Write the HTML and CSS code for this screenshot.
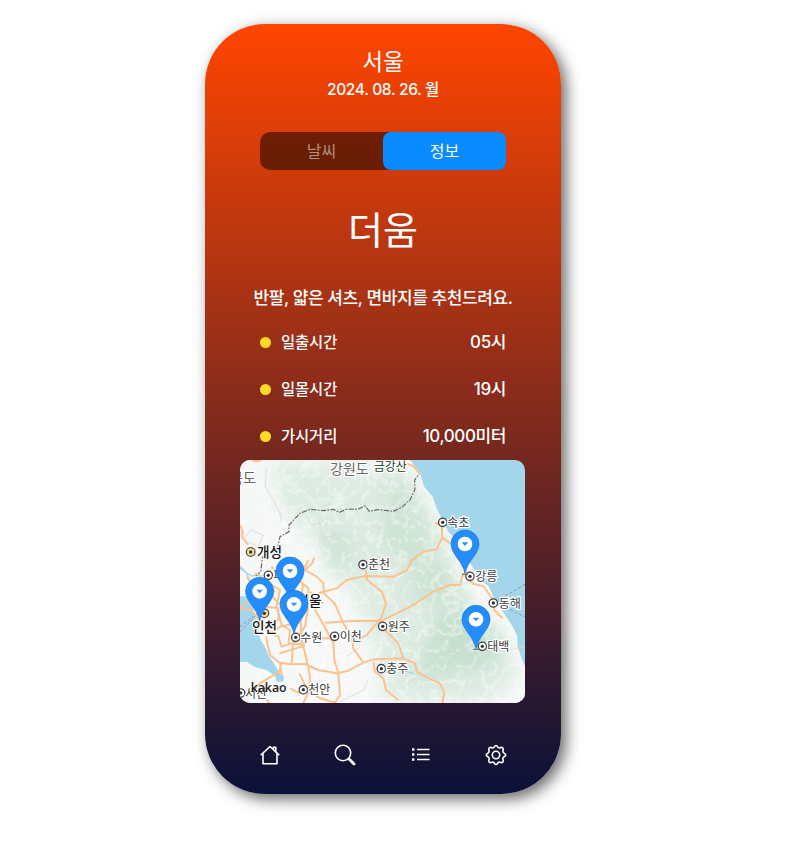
FILE: index.html
```
<!DOCTYPE html>
<html lang="ko">
<head>
<meta charset="utf-8">
<title>서울 날씨</title>
<link rel="stylesheet" href="styles.css">
</head>
<body>
<main class="phone">
  <header class="head">
    <h1 class="city">서울</h1>
    <p class="date">2024. 08. 26. 월</p>
  </header>
  <div class="tabs">
    <button class="tab">날씨</button>
    <button class="tab active">정보</button>
  </div>
  <h2 class="feel">더움</h2>
  <p class="advice">반팔, 얇은 셔츠, 면바지를 추천드려요.</p>
  <ul class="facts">
    <li><i class="dot"></i><span class="key">일출시간</span><span class="val">05시</span></li>
    <li><i class="dot"></i><span class="key">일몰시간</span><span class="val">19시</span></li>
    <li><i class="dot"></i><span class="key">가시거리</span><span class="val">10,000미터</span></li>
  </ul>
  <svg class="map" viewBox="0 0 855 729">
    <defs>
      <filter id="soft" x="-30%" y="-30%" width="160%" height="160%"><feGaussianBlur stdDeviation="26"/></filter>
      <filter id="relief" x="0" y="0" width="100%" height="100%">
        <feTurbulence type="turbulence" baseFrequency="0.026 0.021" numOctaves="5" seed="8"/>
        <feColorMatrix values="0 0 0 0 1  0 0 0 0 1  0 0 0 0 1  -3.4 0 0 0 1.05"/>
      </filter>
      <clipPath id="land"><path d="M0 0H510L540 38 552 80 578 110 592 150 608 180 625 215 655 245 680 290 700 325 715 355 745 378 760 410 775 435 795 465 818 500 832 530 833 560 845 595 855 620V729H0Z"/></clipPath>
      <g id="pin">
        <path d="M0 88C-8 50-42 30-42 0A42 42 0 0 1 42 0C42 30 8 50 0 88Z" fill="#258dfa" stroke="#1474df" stroke-width="2"/>
        <circle r="22" fill="#fff"/><path d="M-10-5H10L0 6Z" fill="#3690e8"/>
      </g>
      <g id="town"><circle r="12.5" fill="#fff" stroke="#444" stroke-width="4"/><circle r="5" fill="#333"/></g>
      <g id="metro"><circle r="13" fill="#f7df95" stroke="#5c5548" stroke-width="4"/><circle r="5" fill="#333"/></g>
    </defs>
    <rect width="855" height="729" fill="#a3d6ea"/>
    <g clip-path="url(#land)">
      <rect width="855" height="729" fill="#f6f8f7"/>
      <g filter="url(#soft)" fill="#b9dac4">
        <path d="M90 0L490 20 560 130 620 250 690 400 790 540 840 650 740 729H440L400 560 340 400 240 270 120 140Z" opacity=".4"/>
        <path d="M420 40L510 60 540 150 600 240 590 320 640 390 610 440 520 350 450 290 460 180Z" opacity=".4"/>
        <path d="M240 190L350 230 330 330 260 350Z" opacity=".4"/>
        <path d="M580 470L680 430 790 530 760 620 640 640 530 660 560 560Z" opacity=".65"/>
        <path d="M410 160L490 150 480 260 420 240ZM600 300L670 400 560 450 490 400Z" opacity=".35"/>
      </g>
      <path d="M60 0H855V729H330L230 400 60 180Z" filter="url(#relief)" opacity=".6"/>
    </g>
    <path d="M0 408L25 410 40 425 42 462 50 480 55 515 62 540 75 560 88 590 105 615 118 640 132 648 130 665H110L106 648 80 630 45 622 20 605 0 606Z" fill="#a3d6ea"/>
    <path d="M0 325L35 348 55 345M0 318L20 340 30 365M455 622L520 640" fill="none" stroke="#a3d6ea" stroke-width="4"/>
    <g class="districts">
      <path d="M80 25L75 80 100 120 120 160 125 185M190 150L215 195 240 190 248 235 290 225 315 250 325 310M15 235L30 210 70 225 55 260 20 245M320 590L360 560 345 545M520 545L555 560 600 545 640 570 720 555 790 575 855 560M500 675L540 640 590 650 610 690M300 725L370 690 385 660M600 460L650 470"/>
    </g>
    <path d="M48 348L62 335 68 290 110 275 120 230 147 215 147 195 180 160 210 148 250 152 280 148 298 157 320 148 355 147 375 138 388 154 415 149 460 154 485 142 510 120 525 88 524 60 538 42" class="border"/>
    <path d="M0 500L60 455M0 515L75 440M855 373L775 420M770 430L855 470" class="ferry"/>
    <g class="roads">
      <path d="M500 10L520 18 540 42M35 0L50 4 65 0M0 195L8 215 7 232 25 255M586 188L606 198V232L628 248 650 258M606 235L590 268 550 275 515 302 500 332 460 350 375 348 320 360 290 385 235 400M377 330L382 360 425 395 438 430 425 470 415 485 380 525 362 535M415 485L450 470 520 435 580 395 630 375H660L668 345 680 335M680 355L700 372 730 378 760 420 762 450 788 475M255 488L340 483 415 482 435 510 475 550 490 595 400 598 370 608 325 632 290 640 235 630 195 612 150 613 125 608M490 595L525 610 530 635 560 652 600 670 613 700 607 729M222 293L217 310 195 330 230 350 250 370 252 400 285 432 310 490 335 530 340 565 370 608M190 330L205 300M220 440L248 490 280 550 283 600 295 640 300 705 285 728 240 715 200 685 178 640M245 535H285M400 605L405 635 430 655 438 690 475 720M185 540L200 600 210 650 208 690 190 729M125 606L118 635 60 670 25 700M0 450L20 425 45 412M125 645L120 610 90 585 78 530M150 685L180 700 208 690M75 715L90 729"/>
      <path d="M90 520L115 530 125 560 155 550 195 555M85 525L120 500 165 490 190 450M160 540L155 610M190 370L180 430 185 555M205 440L195 500 160 550M90 400L115 430 170 440M95 320L108 340M20 350L35 370M45 340L65 350M95 375L120 390 110 440 125 495 150 510 145 555M175 360L205 385 203 430M5 445L35 450 65 490 95 520M80 440L115 445 115 480 90 490M210 395L250 430M118 580L195 557M75 365L105 395"/>
    </g>
    <g class="towns">
      <use href="#town" x="608" y="187"/><use href="#town" x="369" y="314"/><use href="#town" x="85" y="346"/>
      <use href="#town" x="690" y="349"/><use href="#town" x="760" y="429"/><use href="#town" x="428" y="499"/>
      <use href="#town" x="284" y="529"/><use href="#town" x="167" y="532"/><use href="#town" x="727" y="559"/>
      <use href="#town" x="424" y="626"/><use href="#town" x="190" y="689"/><use href="#town" x="2" y="699"/>
      <use href="#metro" x="32" y="276"/><use href="#metro" x="73" y="460"/>
      <text x="622" y="201">속초</text><text x="384" y="328">춘천</text><text x="100" y="360">파주</text>
      <text x="706" y="363">강릉</text><text x="776" y="443">동해</text><text x="443" y="513">원주</text>
      <text x="299" y="543">이천</text><text x="181" y="546">수원</text><text x="742" y="573">태백</text>
      <text x="439" y="640">충주</text><text x="205" y="703">천안</text><text x="15" y="715">서산</text>
    </g>
    <g class="cities"><text x="51" y="291">개성</text><text x="169" y="437">서울</text><text x="36" y="516">인천</text></g>
    <g class="regions"><text x="270" y="41">강원도</text><text x="-30" y="70">북도</text></g>
    <text class="peak" x="401" y="33">금강산</text>
    <text class="brand" x="32" y="697">kakao</text>
    <path d="M666 343H684M700 568H716" stroke="#777" stroke-width="4"/>
    <use href="#pin" x="150" y="333"/><use href="#pin" x="59" y="394"/><use href="#pin" x="162" y="433"/>
    <use href="#pin" x="675" y="252"/><use href="#pin" x="708" y="478"/>
  </svg>
  <nav class="nav">
    <svg viewBox="0 0 22 22"><path d="M1.8 11.2L11 2.5 20.2 11.2M4 9.5V19.8H18V9.5M14.4 4.7V3.4H16.8V7.5"/></svg>
    <svg viewBox="0 0 22 22"><circle cx="9" cy="9" r="7.7"/><path d="M14.8 14.8L20 20" class="handle"/></svg>
    <svg viewBox="0 0 22 22"><path d="M7 5.5H19.5M7 10.5H19.5M7 15.5H19.5"/><path d="M2 5.5H4.4M2 10.5H4.4M2 15.5H4.4" class="bullet"/></svg>
    <svg viewBox="0 0 22 22"><circle cx="11" cy="11" r="3.7"/><path d="M9.4 2.7Q11 .3 12.6 2.7Q13.4 4.5 15.1 3.7Q18.4 2.6 18.3 5.6Q17.1 8.4 19.2 9.2Q22.3 11 19.2 12.8Q17.1 13.6 18.3 16.4Q18.4 19.4 15.1 18.3Q13.4 17.5 12.6 19.3Q11 21.7 9.4 19.3Q8.6 17.5 6.9 18.3Q3.6 19.4 3.7 16.4Q4.9 13.6 2.8 12.8Q-.3 11 2.8 9.2Q4.9 8.4 3.7 5.6Q3.6 2.6 6.9 3.7Q8.6 4.5 9.4 2.7Z"/></svg>
  </nav>
</main>
</body>
</html>
```
FILE: styles.css
```
* { box-sizing: border-box; margin: 0; padding: 0; }
body {
  width: 811px; height: 868px; overflow: hidden; background: #fff; color: #fff;
  font-family: Inter, "Noto Sans CJK KR", sans-serif;
}
.phone {
  display: flex; flex-direction: column; align-items: center;
  width: 356px; height: 770px; margin: 24px 0 0 205px; padding-top: 21px;
  border-radius: 60px;
  background: linear-gradient(#ff4500, #0a1138);
  box-shadow: 5px 5px 15px rgba(0, 0, 0, .6);
}
.head { text-align: center; }
.city { font-size: 22.5px; font-weight: 400; line-height: 34px; }
.date { font-size: 15.5px; font-weight: 500; line-height: 22px; letter-spacing: -.33px; white-space: nowrap; }
.tabs {
  display: flex; width: 246px; height: 38px; margin-top: 31px;
  border-radius: 10px; background: rgba(0, 0, 0, .5);
}
.tab {
  flex: 1; padding-bottom: 2px; border: 0; border-radius: 8px; background: none;
  color: rgba(255, 255, 255, .5); font: 400 16px "Noto Sans CJK KR", sans-serif;
}
.tab.active { background: #0a8aff; color: #fff; }
.feel { margin-top: 30px; font-size: 38px; font-weight: 400; line-height: 60px; }
.advice { margin-top: 26px; font-size: 17px; font-weight: 500; line-height: 24px; letter-spacing: -.4px; white-space: nowrap; }
.facts { width: 246px; margin-top: 7px; list-style: none; }
.facts li { display: flex; align-items: center; height: 47px; font-size: 15.4px; font-weight: 500; }
.dot { width: 11px; height: 11px; margin: 4px 10px 0 0; border-radius: 50%; background: #ffdc23; }
.key { letter-spacing: -.1px; }
.val { margin-left: auto; font-size: 17px; letter-spacing: -.4px; }
.map { display: block; width: 285px; height: 243px; margin: 2px 1px 0 0; border-radius: 10px; flex: none; }
.map text { font-family: "Noto Sans CJK KR", sans-serif; paint-order: stroke; stroke: #fff; stroke-width: 7px; stroke-linejoin: round; }
.roads { fill: none; stroke: #fac28e; stroke-width: 6; stroke-linejoin: round; }
.districts { fill: none; stroke: #d6d8d6; stroke-width: 2.5; }
.border { fill: none; stroke: #666; stroke-width: 3.5; stroke-dasharray: 16 4 5 4; }
.ferry { fill: none; stroke: #8199ad; stroke-width: 3; stroke-dasharray: 9 6; }
.towns text { font-size: 36px; fill: #3c3c3c; }
.cities text { font-size: 41px; font-weight: 500; fill: #151515; }
.regions text { font-size: 42px; fill: #666; }
.map .peak { font-size: 36px; fill: #1c4020; }
.map .brand { font-family: "Open Sans", sans-serif; font-size: 37px; font-weight: 600; fill: #222; stroke: none; }
.nav { display: flex; justify-content: space-between; width: 248px; margin-top: 41px; }
.nav svg { width: 22px; height: 22px; fill: none; stroke: #fff; stroke-width: 1.6; stroke-linejoin: round; }
.nav .handle { stroke-width: 2.8; stroke-linecap: round; }
.nav .bullet { stroke-width: 2.4; }
```
